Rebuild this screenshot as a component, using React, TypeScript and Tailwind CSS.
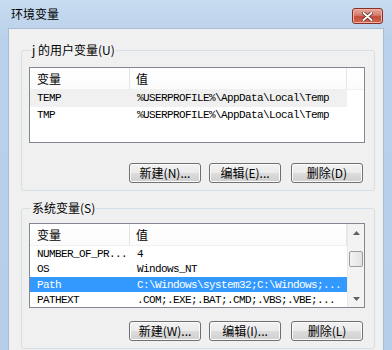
import React from 'react';

const cjk = "font-['Noto_Sans_CJK_SC','Noto_Sans_CJK_JP',sans-serif]";
const mono = "font-['Liberation_Mono',monospace]";

type Row = { name: string; value: string; state?: 'selected' | 'inactive' };

const userVars: Row[] = [
  { name: 'TEMP', value: '%USERPROFILE%\\AppData\\Local\\Temp', state: 'inactive' },
  { name: 'TMP', value: '%USERPROFILE%\\AppData\\Local\\Temp' },
];

const systemVars: Row[] = [
  { name: 'NUMBER_OF_PR...', value: '4' },
  { name: 'OS', value: 'Windows_NT' },
  { name: 'Path', value: 'C:\\Windows\\system32;C:\\Windows;...', state: 'selected' },
  { name: 'PATHEXT', value: '.COM;.EXE;.BAT;.CMD;.VBS;.VBE;...' },
];

const WinButton = ({ label, className = '' }: { label: string; className?: string }) => (
  <button
    className={`w-[72px] h-[20px] rounded-[3px] border border-[#707070] bg-[linear-gradient(#f2f2f2_0%,#ebebeb_50%,#dddddd_50%,#cfcfcf_100%)] shadow-[inset_0_0_0_1px_#fbfbfb] text-[12px] leading-[18px] text-black ${cjk} ${className}`}
  >
    {label}
  </button>
);

const Arrow = ({ up }: { up?: boolean }) => (
  <div className="h-[17px] flex items-center justify-center">
    <svg width="7" height="4" viewBox="0 0 7 4">
      {up ? <path d="M0 4 L3.5 0 L7 4 Z" fill="#606060" /> : <path d="M0 0 L3.5 4 L7 0 Z" fill="#606060" />}
    </svg>
  </div>
);

const VarList = ({ rows, height, scroll }: { rows: Row[]; height: string; scroll?: boolean }) => (
  <div className={`${height} w-[336px] border border-[#828790] bg-white flex overflow-hidden`}>
    <div className="flex-1 flex flex-col">
      <div className={`h-[22px] flex border-b border-[#f0f0f0] bg-[linear-gradient(#ffffff,#fbfbfc)] text-[12px] text-black ${cjk}`}>
        <div className="w-[100px] border-r border-[#e5e5e5] pl-[7px] leading-[22px]">变量</div>
        <div className="w-[217px] border-r border-[#e5e5e5] pl-[6px] leading-[22px]">值</div>
        <div className="flex-1" />
      </div>
      {rows.map((r) => (
        <div
          key={r.name}
          className={`h-[17px] w-[317px] flex text-[11px] leading-[17px] tracking-[-0.6px] whitespace-nowrap overflow-hidden ${mono} ${
            r.state === 'selected'
              ? 'bg-[#3399ff] text-white'
              : r.state === 'inactive'
              ? 'bg-[#f0f0f0] text-black'
              : 'text-black'
          }`}
        >
          <div className="w-[100px] pl-[7px]">{r.name}</div>
          <div className="w-[217px] pl-[7px]">{r.value}</div>
        </div>
      ))}
    </div>
    {scroll && (
      <div className="w-[17px] flex flex-col bg-[#f3f3f3] border-l border-[#eaeaea]">
        <Arrow up />
        <div className="h-[10px]" />
        <div className="mx-[1px] h-[16px] rounded-[2px] border border-[#9c9c9c] bg-[linear-gradient(90deg,#f3f3f3,#e2e2e2)]" />
        <div className="flex-1" />
        <Arrow />
      </div>
    )}
  </div>
);

const Group = ({
  title,
  className,
  children,
}: {
  title: string;
  className?: string;
  children: React.ReactNode;
}) => (
  <fieldset className={`mx-[10px] ml-[12px] rounded-[3px] border border-[#d5dfe5] pl-[7px] pr-[9px] pb-[7px] ${className ?? ''}`}>
    <legend className={`ml-[2px] px-[1px] text-[12px] leading-[14px] text-black ${cjk}`}>{title}</legend>
    {children}
  </fieldset>
);

export default function App() {
  return (
    <div className="w-[392px] h-[350px] overflow-hidden flex flex-col bg-[linear-gradient(#c7dbf0,#b9d1ea_40px,#b6cee8)]">
      <div className="h-[28px] flex items-center pl-[11px] pr-[9px]">
        <span className={`text-[12px] text-black ${cjk}`}>环境变量</span>
        <div className="flex-1" />
        <button className="w-[31px] h-[16px] mt-[4px] rounded-[3px] border border-[#8b2d24] bg-[linear-gradient(#e9a99b,#d27b6c_45%,#c44a38_55%,#cf6a55)] shadow-[inset_0_0_0_1px_#eeb4a8] flex items-center justify-center">
          <svg width="11" height="9" viewBox="0 0 11 9">
            <path d="M1.5 1 L9.5 8 M9.5 1 L1.5 8" stroke="#5a1a12" strokeWidth="3.4" strokeLinecap="round" />
            <path d="M1.5 1 L9.5 8 M9.5 1 L1.5 8" stroke="#ffffff" strokeWidth="2" strokeLinecap="round" />
          </svg>
        </button>
      </div>
      <div className="mx-[8px] flex-1 bg-[#f0f0f0] border border-[#a9bdd3] border-b-0">
        <Group title="j 的用户变量(U)" className="mt-[14px]">
          <div className="pt-[10px]">
            <VarList rows={userVars} height="h-[76px]" />
          </div>
          <div className="mt-[20px] mr-[2px] flex justify-end">
            <WinButton label="新建(N)..." />
            <WinButton label="编辑(E)..." className="ml-[8px]" />
            <WinButton label="删除(D)" className="ml-[10px]" />
          </div>
        </Group>
        <Group title="系统变量(S)" className="mt-[10px]">
          <div className="pt-[8px]">
            <VarList rows={systemVars} height="h-[85px]" scroll />
          </div>
          <div className="mt-[13px] mr-[2px] flex justify-end">
            <WinButton label="新建(W)..." />
            <WinButton label="编辑(I)..." className="ml-[8px]" />
            <WinButton label="删除(L)" className="ml-[10px]" />
          </div>
        </Group>
      </div>
    </div>
  );
}
